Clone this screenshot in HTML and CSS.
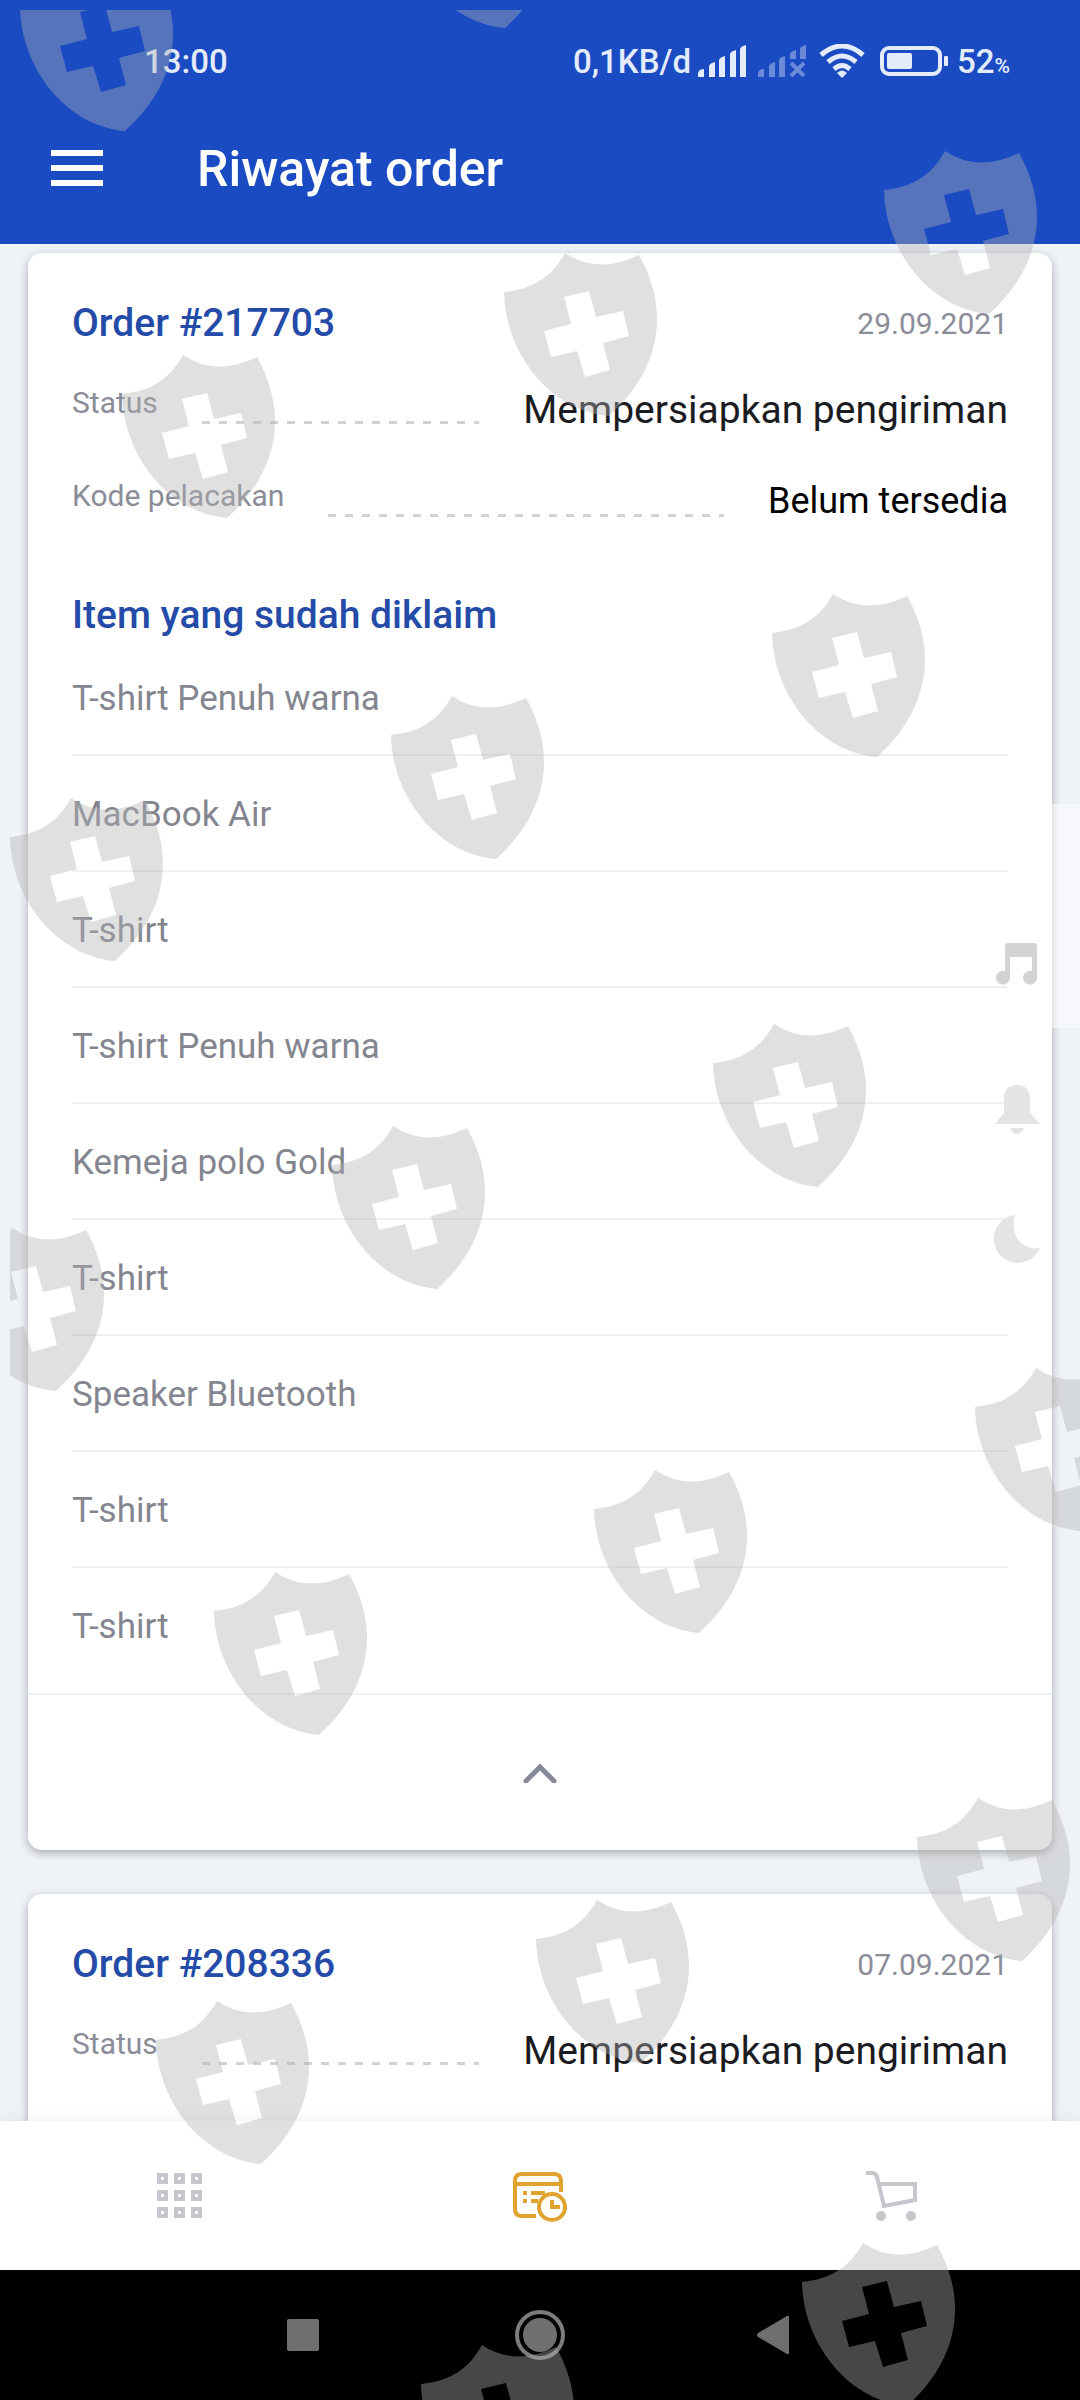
FILE: index.html
```html
<!DOCTYPE html>
<html lang="id">
  <head>
    <meta charset="UTF-8" />
    <meta name="viewport" content="width=device-width, initial-scale=1.0" />
    <title>Riwayat order</title>
    <link rel="stylesheet" href="styles.css" />
  </head>
  <body>
    <header class="header">
      <div class="status-bar">
        <span class="clock">13:00</span>
        <div class="status-icons">
          <span>0,1KB/d</span>
          <svg class="signal" width="48" height="32" viewBox="0 0 48 32">
            <path d="M0 32v-4q1-4 6-4v8zM11 32V21q1-3 6-4v15zM21 32V15q1-3 6-4v21zM32 32V9q1-3 6-4v27zM42 32V4q1-3 6-4v32z" />
          </svg>
          <svg class="signal signal-off" width="48" height="32" viewBox="0 0 48 32">
            <path d="M0 32v-4q1-4 6-4v8zM11 32V21q1-3 6-4v15zM21 32V15q1-3 6-4v21zM32 14V9q1-3 6-4v9zM42 14V4q1-3 6-4v14z" />
            <path class="signal-cross" d="M33 18L46 31M46 18L33 31" />
          </svg>
          <svg class="wifi" width="46" height="34" viewBox="0 0 46 34">
            <path d="M2 11Q23-7 44 11M9 18Q23 6 37 18M15 25Q23 18 31 25" />
            <path class="wifi-dot" d="M18 29Q23 24 28 29L23 34z" />
          </svg>
          <svg class="battery" width="68" height="32" viewBox="0 0 68 32">
            <rect class="battery-case" x="2" y="3" width="58" height="26" rx="7" />
            <rect x="7" y="8" width="25" height="16" rx="2" />
            <rect x="64" y="11" width="4" height="10" rx="1" />
          </svg>
          <span class="percent">52<small>%</small></span>
        </div>
      </div>
      <div class="app-bar">
        <button class="menu-button" aria-label="Menu">
          <svg width="52" height="36" viewBox="0 0 52 36">
            <path d="M0 3h52M0 18h52M0 33h52" />
          </svg>
        </button>
        <h1>Riwayat order</h1>
      </div>
    </header>

    <main class="orders">
      <article class="card">
        <div class="card-body">
          <div class="card-head">
            <h2>Order #217703</h2>
            <time datetime="2021-09-29">29.09.2021</time>
          </div>
          <div class="info-row">
            <span class="info-label">Status</span>
            <span class="dashes"></span>
            <span class="info-value">Mempersiapkan pengiriman</span>
          </div>
          <div class="info-row">
            <span class="info-label">Kode pelacakan</span>
            <span class="dashes"></span>
            <span class="info-value tracking">Belum tersedia</span>
          </div>
          <h2 class="items-title">Item yang sudah diklaim</h2>
          <ul class="items">
            <li>T-shirt Penuh warna</li>
            <li>MacBook Air</li>
            <li>T-shirt</li>
            <li>T-shirt Penuh warna</li>
            <li>Kemeja polo Gold</li>
            <li>T-shirt</li>
            <li>Speaker Bluetooth</li>
            <li>T-shirt</li>
            <li>T-shirt</li>
          </ul>
        </div>
        <button class="collapse-button" aria-label="Tutup">
          <svg width="34" height="20" viewBox="0 0 34 20">
            <path d="M3 18L17 4L31 18" />
          </svg>
        </button>
      </article>

      <article class="card">
        <div class="card-body">
          <div class="card-head">
            <h2>Order #208336</h2>
            <time datetime="2021-09-07">07.09.2021</time>
          </div>
          <div class="info-row">
            <span class="info-label">Status</span>
            <span class="dashes"></span>
            <span class="info-value">Mempersiapkan pengiriman</span>
          </div>
        </div>
      </article>
    </main>

    <nav class="tabs">
      <a href="#" aria-label="Katalog">
        <svg class="tab-grid" width="46" height="46" viewBox="0 0 46 46">
          <path d="M2 2h7v7h-7zM19 2h7v7h-7zM36 2h7v7h-7zM2 19h7v7h-7zM19 19h7v7h-7zM36 19h7v7h-7zM2 36h7v7h-7zM19 36h7v7h-7zM36 36h7v7h-7z" />
        </svg>
      </a>
      <a href="#" aria-label="Riwayat order">
        <svg class="tab-history" width="56" height="52" viewBox="0 0 56 52">
          <path d="M24 46H10q-7 0-7-7V11q0-7 7-7h32q7 0 7 7v11M3 14h46" />
          <path d="M11 23h4M19 23h14M11 31h4M19 31h7" />
          <circle cx="40" cy="37" r="13" />
          <path d="M40 30v7h8" />
        </svg>
      </a>
      <a href="#" aria-label="Keranjang">
        <svg class="tab-cart" width="68" height="52" viewBox="0 0 68 52">
          <path d="M0 3h6q4 0 5 4l7 29 31-6V14H13" />
          <circle cx="15" cy="46" r="5" />
          <circle cx="45" cy="46" r="5" />
        </svg>
      </a>
    </nav>

    <div class="system-bar">
      <button aria-label="Terkini">
        <svg width="64" height="64" viewBox="0 0 64 64"><rect x="16" y="16" width="32" height="32" rx="2" /></svg>
      </button>
      <button aria-label="Beranda">
        <svg width="64" height="64" viewBox="0 0 64 64">
          <circle cx="32" cy="32" r="17" />
          <circle class="home-ring" cx="32" cy="32" r="23" />
        </svg>
      </button>
      <button aria-label="Kembali">
        <svg width="64" height="64" viewBox="0 0 64 64"><path d="M13 30L42 13q2-1 2 1v36q0 2-2 1L13 34q-2-2 0-4z" /></svg>
      </button>
    </div>

    <!-- sound panel ghost on the right edge -->
    <div class="side-panel"></div>
    <svg class="side-icons" width="48" height="324" viewBox="0 0 48 324">
      <path class="music" d="M16 3h26q3 0 3 3v32a7 7 0 1 1-5-7V17H18v21a7 7 0 1 1-5-7V6q0-3 3-3z" />
      <path d="M3 184l9-11v-14q0-14 13-14t13 14v14l10 11zM18 188h14q-2 6-7 6t-7-6z" />
      <path d="M23 275a24 24 0 1 0 25 33c-17 3-31-12-25-33z" />
    </svg>

    <!-- shield overlay -->
    <svg class="shields" aria-hidden="true">
      <defs>
        <path
          id="shield"
          fill-rule="evenodd"
          d="M0 0Q33 22 74 2C110 66 88 124 44 163C-15 158-60 100-61 39C-30 36-12 22 0 0zM-1 44L6 71L-21 78L-14 104L12 98L20 124L45 117L38 90L64 83L58 58L31 64L24 38z"
        />
      </defs>
      <use href="#shield" x="71" y="-42" />
      <use href="#shield" x="451" y="-145" />
      <use href="#shield" x="935" y="141" />
      <use href="#shield" x="555" y="243" />
      <use href="#shield" x="173" y="345" />
      <use href="#shield" x="823" y="584" />
      <use href="#shield" x="442" y="686" />
      <use href="#shield" x="61" y="788" />
      <use href="#shield" x="764" y="1014" />
      <use href="#shield" x="383" y="1116" />
      <use href="#shield" x="2" y="1218" />
      <use href="#shield" x="1026" y="1358" />
      <use href="#shield" x="645" y="1460" />
      <use href="#shield" x="265" y="1562" />
      <use href="#shield" x="968" y="1788" />
      <use href="#shield" x="587" y="1890" />
      <use href="#shield" x="207" y="1991" />
      <use href="#shield" x="853" y="2233" />
      <use href="#shield" x="472" y="2335" />
    </svg>
  </body>
</html>
```

FILE: styles.css
```css
* {
  box-sizing: border-box;
}

body {
  position: relative;
  display: flex;
  flex-direction: column;
  height: 100vh;
  margin: 0;
  overflow: hidden;
  font-family: Roboto, "Noto Sans", sans-serif;
  background-color: #eff3f7;
}

h1,
h2 {
  margin: 0;
  font-weight: 500;
}

button {
  padding: 0;
  border: none;
  background: none;
  cursor: pointer;
}

svg {
  display: block;
}

/* header */
.header {
  flex: none;
  padding-bottom: 30px;
  background-color: #1a4bc2;
  color: #fff;
}

.status-bar {
  display: flex;
  justify-content: space-between;
  align-items: center;
  height: 122px;
  padding: 0 70px 0 144px;
  font-size: 33px;
  font-weight: 500;
  color: #e4ecfc;
}

.status-icons {
  display: flex;
  align-items: center;
}

.status-icons svg {
  fill: #e4ecfc;
}

.signal {
  margin-left: 7px;
}

.signal-off {
  margin-left: 12px;
  opacity: 0.4;
}

.signal-cross {
  stroke: #e4ecfc;
  stroke-width: 4;
}

.wifi {
  margin-left: 13px;
  stroke: #e4ecfc;
  stroke-width: 5;
}

.status-icons .wifi {
  fill: none;
}

.wifi .wifi-dot {
  fill: #e4ecfc;
  stroke: none;
}

.battery {
  margin-left: 15px;
}

.battery-case {
  fill: none;
  stroke: #e4ecfc;
  stroke-width: 4;
}

.percent {
  margin-left: 9px;
}

.percent small {
  font-size: 21px;
}

.app-bar {
  display: flex;
  align-items: center;
  gap: 94px;
  height: 92px;
  padding: 0 51px;
}

.app-bar h1 {
  padding-top: 2px;
  font-size: 50px;
}

.menu-button svg {
  stroke: #fff;
  stroke-width: 6;
}

/* order cards */
.orders {
  flex: 1;
  min-height: 0;
  padding: 9px 28px 0;
  overflow: hidden;
}

.card {
  min-height: 300px;
  margin-bottom: 44px;
  border-radius: 14px;
  background-color: #fff;
  box-shadow: 0 3px 10px rgba(0, 0, 0, 0.3);
}

.card-body {
  padding: 44px 44px 9px;
}

.card-head {
  display: flex;
  justify-content: space-between;
  align-items: center;
  height: 52px;
  margin-bottom: 36px;
}

.card h2 {
  font-size: 39px;
  color: #244ba8;
}

.card-head time {
  font-size: 30px;
  color: #8a8d98;
}

.info-row {
  display: flex;
  align-items: flex-start;
  margin-bottom: 43px;
}

.info-label {
  font-size: 30px;
  line-height: 36px;
  color: #8a8d98;
}

.dashes {
  flex: 1;
  height: 3px;
  margin: 36px 44px 0;
  background: repeating-linear-gradient(to right, #d2d2d2 0 8px, transparent 8px 17px);
}

.info-value {
  font-size: 39px;
  line-height: 50px;
  color: #1b1b22;
}

.info-value.tracking {
  font-size: 36px;
  line-height: 46px;
  color: #000;
}

.card .items-title {
  margin-top: 66px;
  line-height: 50px;
}

.items {
  margin: 0;
  padding: 0;
  list-style: none;
}

.items li {
  height: 116px;
  border-bottom: 2px solid #f0f0f1;
  font-size: 35px;
  line-height: 118px;
  color: #84868f;
}

.items li:last-child {
  border-bottom: none;
}

.collapse-button {
  display: flex;
  justify-content: center;
  align-items: center;
  width: 100%;
  height: 157px;
  border-top: 2px solid #f0f1f3;
}

.collapse-button svg {
  fill: none;
  stroke: #868997;
  stroke-width: 5;
  stroke-linecap: round;
}

/* bottom tabs */
.tabs {
  display: flex;
  flex: none;
  height: 149px;
  background-color: #fff;
  box-shadow: 0 -2px 16px rgba(0, 0, 0, 0.05);
}

.tabs a {
  display: flex;
  flex: 1;
  justify-content: center;
  align-items: center;
}

.tabs svg {
  fill: none;
  stroke-width: 4;
}

.tab-grid,
.tab-cart {
  stroke: #c5c7cc;
}

.tab-cart circle {
  fill: #c5c7cc;
  stroke: none;
}

.tab-history {
  stroke: #e0a32e;
}

.system-bar {
  display: flex;
  flex: none;
  justify-content: center;
  align-items: center;
  gap: 173px;
  height: 130px;
  background-color: #000;
}

.system-bar svg {
  fill: #6f6f6f;
}

.system-bar .home-ring {
  fill: none;
  stroke: #7c7c7c;
  stroke-width: 4;
}

/* overlays */
.side-panel {
  position: absolute;
  top: 804px;
  right: 0;
  width: 28px;
  height: 224px;
  background-color: rgba(255, 255, 255, 0.45);
}

.side-icons {
  position: absolute;
  top: 940px;
  right: 40px;
  fill: #e4e4e4;
}

.side-icons .music {
  fill: #d3d3d3;
}

.shields {
  position: absolute;
  top: 10px;
  left: 10px;
  width: calc(100% - 10px);
  height: calc(100% - 10px);
  overflow: hidden;
  fill: rgba(178, 178, 178, 0.4);
  pointer-events: none;
}
```
